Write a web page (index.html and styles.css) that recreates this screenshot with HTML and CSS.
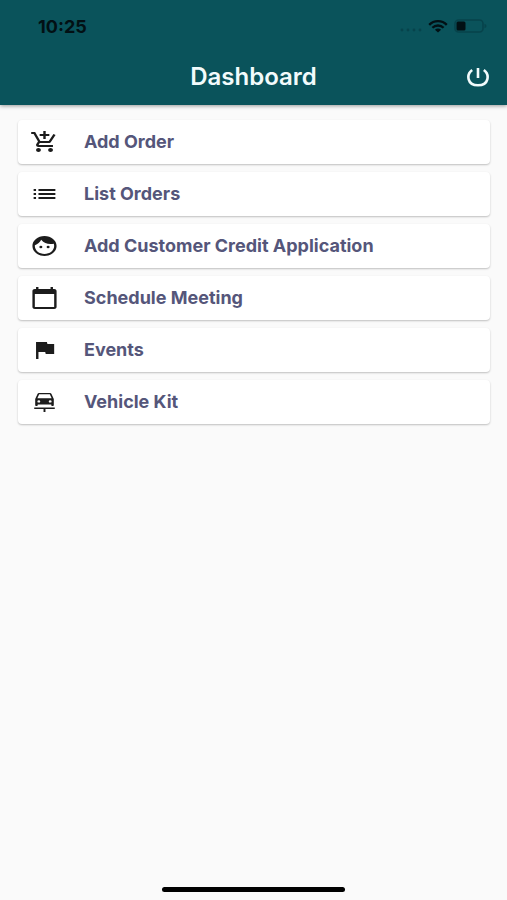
FILE: index.html
```html
<!DOCTYPE html>
<html lang="en">
<head>
<meta charset="utf-8">
<meta name="viewport" content="width=device-width, initial-scale=1">
<title>Dashboard</title>
<link rel="stylesheet" href="styles.css">
</head>
<body>
<header class="app-header">
  <div class="status-bar">
    <span class="clock">10:25</span>
    <div class="indicators">
      <svg class="signal" viewBox="0 0 22 4" aria-hidden="true"><circle cx="2" cy="2" r="1.4"/><circle cx="8" cy="2" r="1.4"/><circle cx="14" cy="2" r="1.4"/><circle cx="20" cy="2" r="1.4"/></svg>
      <svg class="wifi" viewBox="0 0 20 13" preserveAspectRatio="none" aria-hidden="true"><path d="M1.2 4.9C6-.1 14-.1 18.8 4.9M4.4 7.8c3.1-3.1 8.1-3.1 11.2 0" fill="none" stroke="currentColor" stroke-width="2.3"/><path d="M10 12.6 6.9 9.8c1.7-1.6 4.5-1.6 6.2 0z"/></svg>
      <svg class="battery" viewBox="0 0 33 14" aria-hidden="true"><rect x="1" y="1" width="28" height="12" rx="3.5" fill="none" stroke="#07434b" stroke-width="1.6"/><path d="M30.5 4.8c2.6.8 2.6 3.6 0 4.4z" fill="#07434b"/><rect x="2.5" y="2.5" width="9" height="9" rx="1.5"/></svg>
    </div>
  </div>
  <div class="title-bar">
    <h1 class="title">Dashboard</h1>
    <button class="power" type="button" aria-label="Log out">
      <svg viewBox="0 0 24 20" aria-hidden="true"><path d="M12 1v10M6.200 3C.1 7.500 1 18.300 12 18.300S23.900 7.500 17.800 3" fill="none" stroke="currentColor" stroke-width="2.600"/></svg>
    </button>
  </div>
</header>
<main class="content">
  <nav class="menu">
    <a class="card" href="#add-order">
      <svg class="icon" viewBox="0 0 24 24" preserveAspectRatio="none" aria-hidden="true"><path d="M11 9h2V6h3V4h-3V1h-2v3H8v2h3v3zm-4 9c-1.1 0-1.99.9-1.99 2S5.900 22 7 22s2-.9 2-2-.9-2-2-2zm10 0c-1.100 0-1.990.9-1.990 2s.89 2 1.990 2 2-.9 2-2-.9-2-2-2zm-9.830-3.250.03-.12.900-1.630h7.450c.75 0 1.410-.41 1.750-1.030l3.860-7.010L19.420 4h-.01l-1.100 2-2.760 5H8.530l-.13-.27L6.160 6l-.95-2-.94-2H1v2h2l3.600 7.590-1.350 2.450c-.16.28-.25.61-.25.960 0 1.100.9 2 2 2h12v-2H7.420c-.13 0-.25-.11-.25-.25z"/></svg>
      <span>Add Order</span>
    </a>
    <a class="card" href="#orders">
      <svg class="icon" viewBox="0 0 24 24" preserveAspectRatio="none" aria-hidden="true"><path d="M3 11h2v2H3zm0 4h2v2H3zm0-8h2v2H3zm4 4h14v2H7zm0 4h14v2H7zM7 7h14v2H7z"/></svg>
      <span>List Orders</span>
    </a>
    <a class="card" href="#credit">
      <svg class="icon" viewBox="0 0 24 24" preserveAspectRatio="none" aria-hidden="true"><path d="M9 11.750a1.250 1.250 0 1 0 0 2.500 1.250 1.250 0 0 0 0-2.500zm6 0a1.250 1.250 0 1 0 0 2.500 1.250 1.250 0 0 0 0-2.500zM12 2C6.480 2 2 6.480 2 12s4.480 10 10 10 10-4.480 10-10S17.520 2 12 2zm0 18c-4.410 0-8-3.590-8-8 0-.29.02-.58.05-.86 2.360-1.050 4.230-2.980 5.210-5.370a9.974 9.974 0 0 0 10.410 3.970c.21.710.33 1.470.33 2.260 0 4.410-3.590 8-8 8z"/></svg>
      <span>Add Customer Credit Application</span>
    </a>
    <a class="card" href="#meeting">
      <svg class="icon" viewBox="0 0 24 24" preserveAspectRatio="none" aria-hidden="true"><path d="M20 3h-1V1h-2v2H7V1H5v2H4c-1.100 0-2 .9-2 2v16c0 1.100.9 2 2 2h16c1.100 0 2-.9 2-2V5c0-1.100-.9-2-2-2zm0 18H4V8h16v13z"/></svg>
      <span>Schedule Meeting</span>
    </a>
    <a class="card" href="#events">
      <svg class="icon" viewBox="0 0 24 24" preserveAspectRatio="none" aria-hidden="true"><path d="M14.400 6 14 4H5v17h2v-7h5.600l.4 2h7V6z"/></svg>
      <span>Events</span>
    </a>
    <a class="card" href="#vehicle">
      <svg class="icon" viewBox="0 0 24 24" preserveAspectRatio="none" aria-hidden="true"><path fill-rule="evenodd" d="M7.500 3h9c.6 0 1.100.4 1.300.9L19.700 9v6.300c0 .4-.3.700-.7.700h-.7c-.4 0-.7-.3-.7-.7v-.8H6.400v.8c0 .4-.3.700-.7.700H5c-.4 0-.7-.3-.7-.7V9l1.900-5.100c.2-.5.700-.9 1.300-.9zM7.600 4.200 6.100 8.300h11.800l-1.500-4.100zM7.300 10.200a1.200 1.200 0 1 0 0 2.400 1.200 1.200 0 0 0 0-2.400zm9.400 0a1.200 1.200 0 1 0 0 2.400 1.200 1.200 0 0 0 0-2.400zM3.500 17.500h17v1.600h-7.700V22h-1.600v-2.900H3.500z"/></svg>
      <span>Vehicle Kit</span>
    </a>
  </nav>
</main>
<footer class="home-area"><div class="home-indicator"></div></footer>
</body>
</html>
```
FILE: styles.css
```css
* {
  box-sizing: border-box;
}

body {
  display: flex;
  flex-direction: column;
  min-height: 100vh;
  margin: 0;
  background: #fafafa;
  color: #55567a;
  font-family: Inter, "Liberation Sans", sans-serif;
}

svg {
  display: block;
  fill: currentColor;
}

.app-header {
  background: #0a535b;
  box-shadow: 0 1px 4px rgba(0, 0, 0, 0.4);
}

.status-bar {
  display: flex;
  align-items: center;
  justify-content: space-between;
  height: 52px;
  padding: 0 20px 0 38px;
  color: #021014;
}

.clock {
  font-size: 18px;
  font-weight: 700;
}

.indicators {
  display: flex;
  align-items: center;
  gap: 6px;
}

.signal {
  width: 22px;
  height: 4px;
  margin-top: 8px;
  color: #07434b;
}

.wifi {
  width: 20px;
  height: 13px;
}

.battery {
  width: 33px;
  height: 14px;
}

.title-bar {
  display: grid;
  grid-template-columns: 1fr auto 1fr;
  align-items: center;
  height: 53px;
  padding: 0 17px 4px;
  color: #f2fbfc;
}

.title {
  grid-column: 2;
  margin: 0;
  font-size: 24px;
  font-weight: 600;
  line-height: 28px;
}

.power {
  justify-self: end;
  padding: 0;
  border: 0;
  background: none;
  color: inherit;
}

.power svg {
  width: 24px;
  height: 20px;
}

.content {
  flex: 1;
  padding: 15px 17px 15px 18px;
}

.menu {
  display: flex;
  flex-direction: column;
  gap: 8px;
}

.card {
  display: flex;
  align-items: center;
  gap: 25px;
  min-height: 44px;
  padding: 0 12px;
  border-radius: 4px;
  background: #fff;
  box-shadow: 0 1px 2px rgba(0, 0, 0, 0.24);
  color: inherit;
  font-size: 18px;
  font-weight: 700;
  line-height: 24px;
  text-decoration: none;
}

.icon {
  flex: none;
  width: 29px;
  height: 24px;
  color: #1c1c1c;
}

.home-area {
  padding-bottom: 8px;
}

.home-indicator {
  width: 36%;
  height: 5px;
  margin: 0 auto;
  border-radius: 3px;
  background: #000;
}
```
